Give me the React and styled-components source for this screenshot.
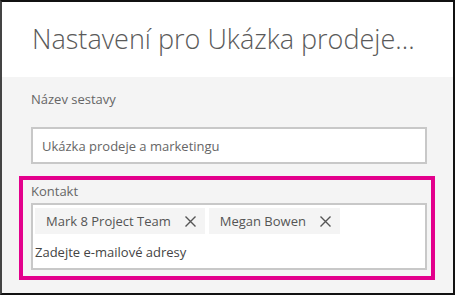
import React from "react";
import styled, { createGlobalStyle } from "styled-components";

const GlobalStyle = createGlobalStyle`
  html, body {
    margin: 0;
    padding: 0;
    background: #ffffff;
  }
  * {
    box-sizing: border-box;
  }
`;

const Frame = styled.div`
  width: 455px;
  height: 295px;
  border: 2px solid #111;
  border-left-color: #444;
  display: flex;
  flex-direction: column;
  font-family: "Open Sans", "Noto Sans", sans-serif;
  overflow: hidden;
`;

const Header = styled.div`
  height: 75px;
  flex-shrink: 0;
  background: #fff;
  padding: 19px 0 0 30px;
`;

const Title = styled.h1`
  margin: 0;
  font-size: 27px;
  font-weight: 300;
  line-height: 36px;
  color: #5a5a5a;
  white-space: nowrap;
`;

const Body = styled.div`
  flex: 1;
  background: #f4f4f4;
  padding: 13px 0 0 29px;
`;

const Field = styled.div`
  width: 396px;
  margin-bottom: ${(p) => p.$gap || 0}px;
`;

const Label = styled.div`
  font-size: 13px;
  line-height: 18px;
  color: #666;
  margin-bottom: ${(p) => p.$space}px;
`;

const TextBox = styled.div`
  height: 37px;
  background: #fff;
  border: 2px solid #c8c8c8;
  padding: 0 9px;
  display: flex;
  align-items: center;
  font-size: 13px;
  color: #666;
`;

const Highlight = styled.div`
  margin-left: -12px;
  width: 416px;
  border: 4px solid #e3008c;
  padding: 2px 4px 6px 8px;
`;

const PeopleBox = styled.div`
  height: 67px;
  background: #fff;
  border: 2px solid #c8c8c8;
  padding: 3px 2px 0;
`;

const Chips = styled.div`
  display: flex;
  gap: 4px;
`;

const Chip = styled.div`
  height: 26px;
  background: #f4f4f4;
  display: flex;
  align-items: center;
  padding: 0 9px 0 11px;
  gap: 14px;
  font-size: 13px;
  color: #555;
`;

const Remove = styled.svg`
  width: 11px;
  height: 11px;
  stroke: #555;
  stroke-width: 1.4;
`;

const Placeholder = styled.div`
  font-size: 13px;
  line-height: 18px;
  color: #444;
  margin-top: 9px;
`;

function CloseIcon() {
  return (
    <Remove viewBox="0 0 11 11">
      <path d="M0.5 0.5 L10.5 10.5 M10.5 0.5 L0.5 10.5" fill="none" />
    </Remove>
  );
}

function Person({ name }) {
  return (
    <Chip>
      <span>{name}</span>
      <CloseIcon />
    </Chip>
  );
}

export default function App() {
  return (
    <>
      <GlobalStyle />
      <Frame>
        <Header>
          <Title>Nastavení pro Ukázka prodeje...</Title>
        </Header>
        <Body>
          <Field $gap={12}>
            <Label $space={19}>Název sestavy</Label>
            <TextBox>Ukázka prodeje a marketingu</TextBox>
          </Field>
          <Highlight>
            <Field>
              <Label $space={3}>Kontakt</Label>
              <PeopleBox>
                <Chips>
                  <Person name="Mark 8 Project Team" />
                  <Person name="Megan Bowen" />
                </Chips>
                <Placeholder>Zadejte e-mailové adresy</Placeholder>
              </PeopleBox>
            </Field>
          </Highlight>
        </Body>
      </Frame>
    </>
  );
}
